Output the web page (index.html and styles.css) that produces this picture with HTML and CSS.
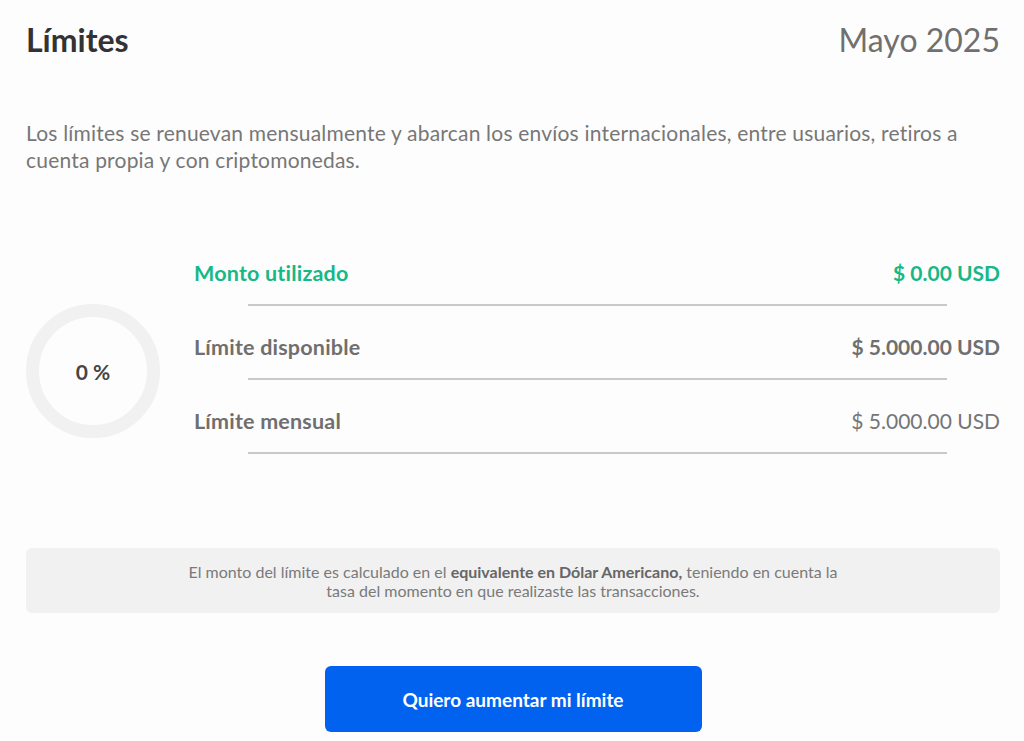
FILE: index.html
```html
<!DOCTYPE html>
<html lang="es">
<head>
<meta charset="utf-8">
<title>Límites</title>
<link rel="stylesheet" href="styles.css">
</head>
<body>
<main class="page">
  <header class="header">
    <h1 class="title">Límites</h1>
    <div class="period">Mayo 2025</div>
  </header>
  <p class="intro">Los límites se renuevan mensualmente y abarcan los envíos internacionales, entre usuarios, retiros a cuenta propia y con criptomonedas.</p>

  <section class="summary">
    <div class="gauge"><span class="gauge-value">0 %</span></div>
    <div class="rows">
      <div class="row row-used">
        <span class="label">Monto utilizado</span>
        <span class="value strong">$ 0.00 USD</span>
      </div>
      <div class="row">
        <span class="label">Límite disponible</span>
        <span class="value strong">$ 5.000.00 USD</span>
      </div>
      <div class="row">
        <span class="label">Límite mensual</span>
        <span class="value">$ 5.000.00 USD</span>
      </div>
    </div>
  </section>

  <div class="note">
    <p class="note-text">El monto del límite es calculado en el <b>equivalente en Dólar Americano,</b> teniendo en cuenta la tasa del momento en que realizaste las transacciones.</p>
  </div>

  <div class="actions">
    <button class="btn-primary" type="button">Quiero aumentar mi límite</button>
  </div>
</main>
</body>
</html>
```

FILE: styles.css
```css
* { box-sizing: border-box; }

html, body {
  margin: 0;
  padding: 0;
  background: #fdfdfd;
}

body {
  font-family: Lato, "Open Sans", sans-serif;
  color: #757575;
}

.page {
  padding: 20px 24px 0 26px;
}

.header {
  display: flex;
  justify-content: space-between;
  align-items: center;
}

.title {
  margin: 0;
  font-size: 32px;
  line-height: 40px;
  font-weight: 700;
  color: #333333;
}

.period {
  font-size: 32px;
  line-height: 40px;
  color: #707070;
}

.intro {
  margin: 59px 0 0;
  font-size: 21px;
  letter-spacing: 0.2px;
  line-height: 27px;
  color: #777777;
}

.summary {
  display: flex;
  align-items: flex-start;
  gap: 34px;
  margin-top: 59px;
}

.gauge {
  flex: none;
  width: 134px;
  height: 134px;
  margin-top: 72px;
  border-radius: 50%;
  border: 13px solid #f1f1f1;
  display: flex;
  align-items: center;
  justify-content: center;
}

.gauge-value {
  font-size: 21px;
  font-weight: 700;
  color: #454545;
}

.rows {
  flex: 1;
}

.row {
  position: relative;
  display: flex;
  justify-content: space-between;
  align-items: center;
  padding: 29px 0 21px;
  font-size: 21px;
  line-height: 24px;
  color: #6f6f6f;
}

.row::after {
  content: "";
  position: absolute;
  left: 54px;
  right: 53px;
  bottom: 0;
  height: 2px;
  background: #c9c9c9;
}

.label {
  font-weight: 700;
  font-size: 21.5px;
  letter-spacing: 0.2px;
}

.value {
  font-weight: 400;
  color: #757575;
}

.value.strong {
  font-weight: 700;
  color: #6f6f6f;
}

.row-used .label,
.row-used .value.strong {
  color: #16b886;
}

.note {
  margin-top: 94px;
  background: #f1f1f1;
  border-radius: 6px;
  padding: 14px 20px 13px;
}

.note-text {
  margin: 0 auto;
  max-width: 670px;
  text-align: center;
  font-size: 16px;
  line-height: 19px;
  color: #7a7a7a;
}

.note-text b {
  font-weight: 700;
  color: #666666;
}

.actions {
  display: flex;
  justify-content: center;
  margin-top: 53px;
}

.btn-primary {
  width: 377px;
  height: 66px;
  border: none;
  border-radius: 6px;
  background: #0062ef;
  color: #ffffff;
  font-family: Lato, "Open Sans", sans-serif;
  font-size: 19px;
  font-weight: 700;
  cursor: pointer;
}
```
